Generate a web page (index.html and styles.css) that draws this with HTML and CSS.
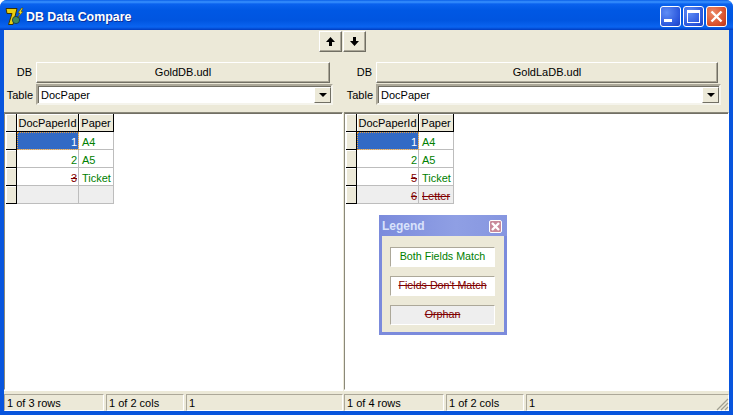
FILE: index.html
```html
<!DOCTYPE html>
<html>
<head>
<meta charset="utf-8">
<title>DB Data Compare</title>
<link rel="stylesheet" href="styles.css">
</head>
<body>
<div class="window">
  <header class="titlebar">
    <svg class="logo" width="19" height="19" viewBox="0 0 19 19">
      <path d="M1 1.500h11l-4 16H3.500L7 6.500H2z" fill="#e9cf10" stroke="#3d3300" stroke-width="1"/>
      <circle cx="11" cy="13" r="3.600" fill="#3f8a5a" stroke="#12304a" stroke-width=".8"/>
      <path d="M16.500 1l-3.500 5h2l-2.500 5 5.500-6.500h-2l2-3.500z" fill="#f5e21a" stroke="#4a3d00" stroke-width=".5"/>
    </svg>
    <span class="title-text">DB Data Compare</span>
    <div class="caption-btns">
      <button class="cap"><span class="min-glyph"></span></button>
      <button class="cap"><span class="max-glyph"></span></button>
      <button class="cap close"><svg width="13" height="13" viewBox="0 0 13 13"><path d="M1.500 1.500l10 10M11.500 1.500l-10 10" stroke="#fff" stroke-width="2.400"/></svg></button>
    </div>
  </header>
  <div class="client">
    <div class="toolbar">
      <button class="tool"><svg width="9" height="9" viewBox="0 0 9 9"><path d="M4.500 0L9 5H6v4H3V5H0z" fill="#000"/></svg></button>
      <button class="tool"><svg width="9" height="9" viewBox="0 0 9 9"><path d="M4.500 9L9 4H6V0H3v4H0z" fill="#000"/></svg></button>
    </div>
    <div class="panes">
      <section class="pane left">
        <div class="form">
          <label class="lbl db">DB</label><div class="db-btn">GoldDB.udl</div>
          <label class="lbl">Table</label>
          <div class="combo"><span class="combo-text">DocPaper</span><span class="combo-arrow"><i></i></span></div>
        </div>
        <div class="gridwrap">
          <div class="grid">
            <div class="ind"></div><div class="hd">DocPaperId</div><div class="hd">Paper</div>
            <div class="ind"></div><div class="c num sel">1</div><div class="c ok">A4</div>
            <div class="ind"></div><div class="c num ok">2</div><div class="c ok">A5</div>
            <div class="ind"></div><div class="c num bad">3</div><div class="c ok">Ticket</div>
            <div class="ind"></div><div class="c num gray"></div><div class="c gray"></div>
          </div>
        </div>
        <footer class="status">
          <div class="st st1">1 of 3 rows</div><div class="st st2">1 of 2 cols</div><div class="st st3">1</div>
        </footer>
      </section>
      <section class="pane right">
        <div class="form">
          <label class="lbl db">DB</label><div class="db-btn">GoldLaDB.udl</div>
          <label class="lbl">Table</label>
          <div class="combo"><span class="combo-text">DocPaper</span><span class="combo-arrow"><i></i></span></div>
        </div>
        <div class="gridwrap">
          <div class="grid">
            <div class="ind"></div><div class="hd">DocPaperId</div><div class="hd">Paper</div>
            <div class="ind"></div><div class="c num sel">1</div><div class="c ok">A4</div>
            <div class="ind"></div><div class="c num ok">2</div><div class="c ok">A5</div>
            <div class="ind"></div><div class="c num bad">5</div><div class="c ok">Ticket</div>
            <div class="ind"></div><div class="c num bad gray">6</div><div class="c bad gray">Letter</div>
          </div>
        </div>
        <footer class="status">
          <div class="st st1">1 of 4 rows</div><div class="st st2">1 of 2 cols</div><div class="st st3">1</div>
          <svg class="gripper" width="14" height="14" viewBox="0 0 14 14"><path d="M13 2L2 13M13 6L6 13M13 10l-3 3" stroke="#a09e90" stroke-width="1.200" fill="none"/></svg>
        </footer>
      </section>
    </div>
  </div>
  <aside class="legend">
    <div class="legend-title"><span>Legend</span>
      <span class="legend-close"><svg width="9" height="9" viewBox="0 0 9 9"><path d="M1 1l7 7M8 1L1 8" stroke="#fff" stroke-width="2.400"/></svg></span>
    </div>
    <div class="legend-body">
      <div class="leg ok">Both Fields Match</div>
      <div class="leg bad">Fields Don't Match</div>
      <div class="leg bad orphan">Orphan</div>
    </div>
  </aside>
</div>
</body>
</html>
```
FILE: styles.css
```css
* { box-sizing: border-box; }
html, body { margin: 0; padding: 0; }
body { width: 733px; height: 415px; overflow: hidden; background: #fff; font: 11px/13px "Liberation Sans", Arial, sans-serif; color: #000; }
button { padding: 0; font: inherit; }

.window { position: relative; width: 733px; height: 415px; display: flex; flex-direction: column; background: #0855dd; border-radius: 7px 7px 0 0; overflow: hidden; }
.titlebar { height: 30px; flex: none; display: flex; align-items: center; padding: 3px 6px 0 5px; background: linear-gradient(#0a5fe8 0, #3a93ff 2px, #0a62ee 4px, #0058e4 10px, #0055e0 20px, #0a64f0 27px, #003cc0 30px); }
.logo { flex: none; }
.title-text { margin-left: 2px; padding-top: 2px; color: #fff; font-weight: 700; font-size: 12.4px; text-shadow: 1px 1px 0 #0a2f9a; }
.caption-btns { margin-left: auto; display: flex; gap: 2px; }
.cap { width: 21px; height: 21px; border: 1px solid #fff; border-radius: 3px; background: radial-gradient(circle at 30% 30%, #5f8df5, #2a56dc 70%, #1c3fc0); display: flex; align-items: center; justify-content: center; }
.close { background: radial-gradient(circle at 30% 30%, #ec8a68, #d9502c 65%, #b8351a); }
.min-glyph { width: 8px; height: 3px; background: #fff; margin: 8px 6px 0 0; }
.max-glyph { width: 13px; height: 13px; border: 1px solid #fff; border-top-width: 3px; }

.client { flex: 1; min-height: 0; margin: 0 4px 4px; background: #ece9d8; display: flex; flex-direction: column; }
.toolbar { flex: none; height: 28px; display: flex; justify-content: center; align-items: flex-end; gap: 1px; padding-bottom: 6px; padding-right: 48px; }
.tool { width: 23px; height: 21px; background: #ece9d8; border: 1px solid; border-color: #fff #716f64 #716f64 #fff; box-shadow: inset -1px -1px 0 #aca899; display: flex; align-items: center; justify-content: center; }

.panes { flex: 1; min-height: 0; display: flex; }
.pane { display: flex; flex-direction: column; min-width: 0; }
.left { width: 339px; }
.right { flex: 1; margin-left: 1px; }
.form { flex: none; display: grid; grid-template-columns: 31px 1fr; grid-auto-rows: 21px; row-gap: 1px; padding: 4px 0 0 0; height: 54px; align-items: center; }
.left .form { margin-left: 1px; padding-right: 13px; }
.right .form { margin-left: 1px; padding-right: 11px; }
.lbl { text-align: right; padding-right: 3px; font-size: 11px; }
.lbl:not(.db) { padding-top: 1px; }
.db { padding-right: 4px; }
.db-btn { height: 21px; background: #ece9d8; border: 1px solid; border-color: #fff #716f64 #716f64 #fff; box-shadow: inset -1px -1px 0 #aca899; text-align: center; line-height: 19px; }
.combo { height: 21px; margin-right: -3px; display: flex; align-items: stretch; background: #fff; border: 2px solid; border-color: #aca899 #f5f4ec #f5f4ec #aca899; box-shadow: inset 1px 1px 0 #716f64; }
.combo-text { flex: 1; padding: 3px 0 0 3px; }
.combo-arrow { width: 17px; margin: 1px 0 0; background: #ece9d8; border: 1px solid; border-color: #fff #716f64 #716f64 #fff; display: flex; align-items: center; justify-content: center; }
.combo-arrow i { width: 0; height: 0; border: 4px solid transparent; border-top-color: #000; border-bottom-width: 0; }

.gridwrap { flex: 1; min-height: 0; background: #fff; border: 1px solid; border-color: #8a887a #fff #fff #8a887a; padding: 1px 0 0 1px; box-shadow: inset 0 1px 0 #716f64; }
.grid { display: grid; grid-template-columns: 11px 62px 35px; grid-auto-rows: 18px; width: max-content; }
.ind, .hd { background: #ece9d8; border: 1px solid #000; border-width: 0 1px 1px 0; box-shadow: inset 1px 1px 0 #fff; }
.ind { border-left: 0; }
.hd { line-height: 19px; text-align: center; white-space: nowrap; }
.c { border: 1px solid #bdbdbd; border-width: 0 1px 1px 0; line-height: 20px; padding: 0 1px 0 3px; white-space: nowrap; overflow: hidden; }
.num { text-align: right; }
.sel { background: #316ac5; color: #fff; outline: 1px dotted #e8a040; outline-offset: -1px; }
.ok { color: #008000; }
.bad { color: #800000; text-decoration: line-through; }
.gray { background: #eeeeee; }

.status { flex: none; height: 21px; display: flex; background: #ece9d8; border-top: 1px solid #fff; padding-top: 3px; position: relative; }
.st { border: 1px solid; border-color: #aca899 #fff #fff #aca899; margin-right: 2px; padding: 2px 0 0 2px; height: 17px; line-height: 13px; }
.st1 { width: 100px; }
.st2 { width: 78px; }
.st3 { flex: 1; margin-right: 0; }
.gripper { position: absolute; right: 0; bottom: 0; }

.legend { position: absolute; left: 379px; top: 215px; width: 128px; height: 120px; background: #ece9d8; border: 3px solid #7b8bdc; border-top: 0; display: flex; flex-direction: column; }
.legend-title { height: 21px; flex: none; padding: 2px 3px 0 3px; margin: 0 -3px; display: flex; align-items: center; justify-content: space-between; background: linear-gradient(90deg, #7b8bdc, #8f9fe4 60%, #8696e0); color: #d9e2fb; font-weight: 700; font-size: 12px; }
.legend-close { width: 13px; height: 13px; margin-right: 2px; border: 1px solid #fff; border-radius: 2px; background: #c98a9a; display: flex; align-items: center; justify-content: center; }
.legend-body { flex: 1; display: flex; flex-direction: column; gap: 9px; padding: 11px 9px 0 8px; }
.leg { height: 20px; background: #fff; border: 1px solid; border-color: #aca899 #fff #fff #aca899; text-align: center; line-height: 17px; font-size: 10.7px; }
.orphan { background: #eee; }
```
